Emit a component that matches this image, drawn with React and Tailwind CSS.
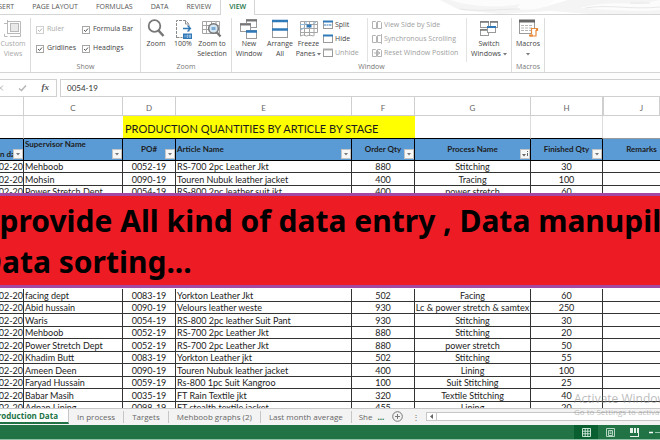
import { useState } from 'react';

const TABS = ['INSERT', 'PAGE LAYOUT', 'FORMULAS', 'DATA', 'REVIEW', 'VIEW'];
const SHEETS = ['In process', 'Targets', 'Mehboob graphs (2)', 'Last month average'];

const TOP_ROWS = [
  ['Mehboob', '0052-19', 'RS-700 2pc Leather Jkt', '880', 'Stitching', '30'],
  ['Mohsin', '0090-19', 'Touren Nubuk leather jacket', '400', 'Tracing', '100'],
  ['Power Stretch Dept', '0054-19', 'RS-800 2pc leather suit jkt', '400', 'power stretch', '60'],
];

const BOTTOM_ROWS = [
  ['facing dept', '0083-19', 'Yorkton Leather Jkt', '502', 'Facing', '60'],
  ['Abid hussain', '0090-19', 'Velours leather weste', '930', 'Lc & power stretch & samtex', '250'],
  ['Waris', '0054-19', 'RS-800 2pc leather Suit Pant', '930', 'Stitching', '30'],
  ['Mehboob', '0052-19', 'RS-700 2pc Leather Jkt', '880', 'Stitching', '20'],
  ['Power Stretch Dept', '0052-19', 'RS-700 2pc Leather Jkt', '880', 'power stretch', '50'],
  ['Khadim Butt', '0083-19', 'Yorkton Leather jkt', '502', 'Stitching', '55'],
  ['Ameen Deen', '0090-19', 'Touren Nubuk leather jacket', '400', 'Lining', '100'],
  ['Faryad Hussain', '0059-19', 'Rs-800 1pc Suit Kangroo', '100', 'Suit Stitching', '25'],
  ['Babar Masih', '0035-19', 'FT Rain Textile jkt', '320', 'Textile Stitching', '40'],
  ['Adnan Lining', '0098-19', 'FT stealth textile jacket', '455', 'Lining', '20'],
];

/* ---------- icons ---------- */

const CustomViewsIcon = () => (
  <svg width="20" height="19" viewBox="0 0 20 19" fill="none" stroke="#b9b9b9">
    <path d="M4.500 1v14M1 4.500h3M4.500 2.500h13v12h-13M1.500 15v2.500h3M7 17.500h10.500V15" />
    <rect x="7.500" y="4.500" width="8" height="8" fill="#e9e9e9" />
  </svg>
);

const ZoomIcon = () => (
  <svg width="20" height="19" viewBox="0 0 20 19" fill="none" stroke="#777">
    <circle cx="8.500" cy="7" r="5.800" strokeWidth="1.800" />
    <path d="M12.500 11.500l5 5.500" strokeWidth="2.600" />
  </svg>
);

const PageZoomIcon = () => (
  <svg width="20" height="20" viewBox="0 0 20 20" fill="none">
    <path d="M3.500 19V1.500h9l3.500 3.500v8M3.500 18.500h6" stroke="#8c8c8c" strokeDasharray="3 1" />
    <path d="M12.500 1.500V5H16" stroke="#8c8c8c" />
    <path d="M10 9.500h7M14.500 6.500l3 3-3 3" stroke="#2f79b9" strokeWidth="1.300" />
    <rect x="10" y="14.500" width="9" height="5.500" fill="#2f79b9" />
    <path d="M12 16v2.500M14 16h1v2.500h-1zM16.500 16h1v2.500h-1z" stroke="#cfe0f0" strokeWidth=".6" />
  </svg>
);

const ZoomSelectionIcon = () => (
  <svg width="20" height="19" viewBox="0 0 20 19" fill="none">
    <path d="M.5 2.500h17v12H.5zM.5 6.500h17M.5 10.500h17M4.500 2.500v12M9.500 2.500v12M14 2.500v12" stroke="#a5a5a5" />
    <circle cx="11.500" cy="9.500" r="4.800" fill="#d6e6f3" stroke="#777" strokeWidth="1.500" />
    <rect x="9.500" y="8" width="4" height="3" fill="#79acd6" />
    <path d="M15 13.500l3.500 4" stroke="#777" strokeWidth="2.300" />
  </svg>
);

const NewWindowIcon = () => (
  <svg width="20" height="20" viewBox="0 0 20 20" fill="#fff" stroke="#9a9a9a">
    <rect x="7.500" y=".5" width="10" height="8" />
    <path d="M7 1.500h11" stroke="#777" strokeWidth="2" />
    <rect x="1.500" y="4.500" width="10" height="8" />
    <path d="M1 5.500h11" stroke="#777" strokeWidth="2" />
    <rect x="7.500" y="11.500" width="10" height="8" />
    <path d="M7 12.500h11" stroke="#2f79b9" strokeWidth="2.500" />
  </svg>
);

const ArrangeIcon = () => (
  <svg width="20" height="20" viewBox="0 0 20 20" fill="#fff" stroke="#9a9a9a">
    <rect x="2.500" y="1.500" width="15" height="17" />
    <path d="M2 2h16M2 10.500h16" stroke="#2f79b9" strokeWidth="2.500" />
  </svg>
);

const FreezeIcon = () => (
  <svg width="20" height="20" viewBox="0 0 20 20" fill="none" stroke="#a5a5a5">
    <path d="M1.500 2.500h17v11h-17zM1.500 5.500h17M1.500 9.500h17M5.500 2.500V17M10.500 2.500V17M15 2.500V17M1.500 13v4l3-1 3 1 3-1 4 1" />
    <rect x="7.500" y="5.500" width="5" height="3" fill="#2f79b9" stroke="none" />
    <path d="M1 5.500h5M7 2v3M2 11l4-3M14 5l3-2" stroke="#8dbbe0" />
  </svg>
);

const SwitchIcon = () => (
  <svg width="20" height="17" viewBox="0 0 20 17" fill="#fff" stroke="#9a9a9a">
    <rect x="1.500" y="1.500" width="8" height="6" />
    <rect x="11.500" y="1.500" width="7" height="6" />
    <path d="M1 2h9M11 2h8" stroke="#777" strokeWidth="1.500" />
    <rect x="1.500" y="9.500" width="8" height="6" />
    <path d="M1 10h9" stroke="#777" strokeWidth="1.500" />
    <rect x="8.500" y="6.500" width="8" height="6" />
    <path d="M8 7h9" stroke="#2f79b9" strokeWidth="2" />
  </svg>
);

const MacrosIcon = () => (
  <svg width="22" height="19" viewBox="0 0 22 19" fill="#fff" stroke="#9a9a9a">
    <rect x="2.500" y="1.500" width="15" height="13" />
    <path d="M2 2h16" stroke="#666" strokeWidth="3" />
    <path d="M4 6.500h12M4 9h12M4 11.500h12" stroke="#b5b5b5" strokeDasharray="3 1" />
    <path d="M14.500 16.500V9.500h5v7z" stroke="none" />
    <path d="M14.500 15.500V9.500h6v2h-1.500V17h-6" stroke="#e88a3a" strokeWidth="1.200" />
    <path d="M12 15.500h4v2h-4zM19 9h2v2h-2z" fill="#e88a3a" stroke="none" />
  </svg>
);

const SmallWindow = ({ color, split }) => (
  <svg width="10" height="10" viewBox="0 0 10 10" fill="#fff" stroke="#9a9a9a">
    <rect x=".5" y="1.500" width="9" height="7" />
    <path d="M0 1.500h10" stroke={color} strokeWidth="2" />
    {split && <path d="M1 5h8" stroke="#2f79b9" strokeDasharray="2 .5" />}
  </svg>
);

const PagesIcon = ({ children }) => (
  <svg width="10" height="10" viewBox="0 0 10 10" fill="none" stroke="#b3b3b3">
    <path d="M.5 1.500h3l1 1v6h-4zM5.500 1.500h3l1 1v6h-4z" />
    {children}
  </svg>
);

const Caret = () => (
  <svg width="4" height="3" viewBox="0 0 4 3" fill="#777"><path d="M0 0h4L2 2.500z" /></svg>
);

/* ---------- ribbon parts ---------- */

const BigButton = ({ icon, lines, menu, disabled, className }) => (
  <button
    type="button"
    disabled={disabled}
    className={`flex shrink-0 flex-col items-center leading-[10px] text-[#444] disabled:text-[#a9a9a9] ${className}`}
  >
    <span className="flex h-[21px] items-center">{icon}</span>
    {lines.map((line, i) => (
      <span key={line} className="flex items-center gap-0.5 whitespace-nowrap">
        {line}
        {menu && i === lines.length - 1 && lines.length > 1 && <Caret />}
      </span>
    ))}
    {menu && lines.length === 1 && <span className="flex h-[10px] items-center"><Caret /></span>}
  </button>
);

const SmallButton = ({ icon, label, disabled }) => (
  <button
    type="button"
    disabled={disabled}
    className="flex items-center gap-0.5 whitespace-nowrap text-[#444] disabled:text-[#a0a0a0]"
  >
    {icon}
    {label}
  </button>
);

const Check = ({ label, disabled }) => (
  <label className={`flex items-center gap-[3px] whitespace-nowrap ${disabled ? 'text-[#a9a9a9]' : 'text-[#444]'}`}>
    <span className="grid">
      <input
        type="checkbox"
        defaultChecked
        disabled={disabled}
        className="peer col-start-1 row-start-1 size-2 appearance-none border border-[#a6a6a6] bg-white disabled:border-[#cfcfcf]"
      />
      <svg className="pointer-events-none invisible col-start-1 row-start-1 size-2 peer-checked:visible" viewBox="0 0 8 8" fill="none" stroke={disabled ? '#b5b5b5' : '#555'}>
        <path d="M2 4l1.500 1.500L6 2.500" />
      </svg>
    </span>
    {label}
  </label>
);

const Group = ({ title, className, children }) => (
  <section className={`flex shrink-0 flex-col border-r border-[#dcdcdc] ${className}`}>
    <div className="flex h-[47px]">{children}</div>
    {title && <h2 className="text-center leading-[10px] text-[#777]">{title}</h2>}
  </section>
);

const Ribbon = () => (
  <div className="flex h-[58px] shrink-0 overflow-hidden border-b border-[#d5d5d5] bg-white pt-[3px] text-[7px]">
    <Group className="w-[31px]">
      <BigButton icon={<CustomViewsIcon />} lines={['Custom', 'Views']} disabled className="w-[26px]" />
    </Group>
    <Group title="Show" className="w-[110px]">
      <div className="grid grid-cols-[46px_1fr] grid-rows-2 pt-0.5 pb-1 pl-[5px]">
        <Check label="Ruler" disabled />
        <Check label="Formula Bar" />
        <Check label="Gridlines" />
        <Check label="Headings" />
      </div>
    </Group>
    <Group title="Zoom" className="w-[91px]">
      <BigButton icon={<ZoomIcon />} lines={['Zoom']} className="w-[30px]" />
      <BigButton icon={<PageZoomIcon />} lines={['100%']} className="w-[24px]" />
      <BigButton icon={<ZoomSelectionIcon />} lines={['Zoom to', 'Selection']} className="w-[34px]" />
    </Group>
    <Group title="Window" className="w-[280px]">
      <BigButton icon={<NewWindowIcon />} lines={['New', 'Window']} className="w-[34px]" />
      <BigButton icon={<ArrangeIcon />} lines={['Arrange', 'All']} className="w-[28px]" />
      <BigButton icon={<FreezeIcon />} lines={['Freeze', 'Panes']} menu className="w-[29px]" />
      <div className="flex w-[44px] flex-col justify-around pb-0.5">
        <SmallButton icon={<SmallWindow color="#2f79b9" split />} label="Split" />
        <SmallButton icon={<SmallWindow color="#2f79b9" />} label="Hide" />
        <SmallButton icon={<SmallWindow color="#aaa" />} label="Unhide" disabled />
      </div>
      <div className="flex w-[100px] flex-col justify-around border-x border-[#e2e2e2] pb-0.5 pl-1">
        <SmallButton icon={<PagesIcon />} label="View Side by Side" disabled />
        <SmallButton icon={<PagesIcon><path d="M9.500 0v10" /></PagesIcon>} label="Synchronous Scrolling" disabled />
        <SmallButton icon={<PagesIcon><path d="M2 5h6M6 3.500L8 5 6 6.500" /></PagesIcon>} label="Reset Window Position" disabled />
      </div>
      <BigButton icon={<SwitchIcon />} lines={['Switch', 'Windows']} menu className="w-[44px]" />
    </Group>
    <Group title="Macros" className="w-[33px]">
      <BigButton icon={<MacrosIcon />} lines={['Macros']} menu className="w-[32px]" />
    </Group>
  </div>
);

const RibbonTabs = () => (
  <nav className="flex h-[15px] shrink-0 border-b border-[#d5d5d5] bg-white text-[7px] text-[#555]">
    <div className="-ml-[18px] flex shrink-0">
      {TABS.map((tab) => (
        <button
          key={tab}
          type="button"
          className={
            tab === 'VIEW'
              ? '-mb-px border-x border-[#d5d5d5] bg-white px-2 font-semibold text-[#217346]'
              : 'px-[9px]'
          }
        >
          {tab}
        </button>
      ))}
    </div>
    <svg className="ml-auto h-[14px] w-[240px]" viewBox="0 0 240 14" preserveAspectRatio="none" fill="#f4f4f4">
      <path d="M20 0h90l14 7 24-7h92v14H170l-40-3-50 3-40-4z" />
      <path d="M30 0c20 7 50 8 70 4l-4 5c20 2 30-1 38-9zM160 8c20-6 40-5 60-4l20-4v10c-26 2-50 0-80-2z" fill="#fcfcfc" />
      <path d="M40 9c20 3 40 0 60 0M165 8c25-4 45 2 75-1M210 3h20" stroke="#e8e8e8" fill="none" />
    </svg>
  </nav>
);

const FormulaBar = () => {
  const [value, setValue] = useState('0054-19');
  return (
    <div className="flex h-[24px] shrink-0 gap-[3px] bg-[#fdfdfd] pt-[6px] text-[8px]">
      <div className="flex w-[57px] shrink-0 items-center justify-between border border-l-0 border-[#d0d0d0] bg-white pr-[7px]">
        <button type="button" aria-label="Cancel">
          <svg width="4" height="6" viewBox="0 0 4 6" stroke="#b5b5b5"><path d="M-2 .5l5 5M3 .5l-5 5" /></svg>
        </button>
        <button type="button" aria-label="Enter">
          <svg width="9" height="8" viewBox="0 0 9 8" fill="none" stroke="#b5b5b5" strokeWidth="1.500"><path d="M1 4.500l2.500 2L8 1.500" /></svg>
        </button>
        <button type="button" className="font-['Liberation_Serif',serif] text-[9px] font-bold text-[#555] italic">
          fx
        </button>
      </div>
      <input
        aria-label="Formula"
        value={value}
        onChange={(e) => setValue(e.target.value)}
        className="min-w-0 flex-1 border border-r-0 border-[#d0d0d0] bg-white px-[6px] font-[Lato,sans-serif] text-[8px] text-[#333] outline-none"
      />
    </div>
  );
};

/* ---------- sheet ---------- */

const FilterButton = ({ label, sorted }) => (
  <button
    type="button"
    aria-label={label}
    className="absolute right-0 bottom-px flex size-[10px] items-center justify-center border border-[#c5c5c5] bg-[#f7f7f7]"
  >
    {sorted ? (
      <svg width="7" height="6" viewBox="0 0 7 6" fill="#666"><path d="M0 3h4L2 5.500zM5 0h1v1H5zM5 2h1v3H5z" /></svg>
    ) : (
      <Caret />
    )}
  </button>
);

const HeaderCell = ({ children, filter = true, sorted, className = '' }) => (
  <th scope="col" className={`relative border-r border-b border-black bg-[#5b9bd5] p-0 font-bold whitespace-nowrap ${className}`}>
    {children}
    {filter && <FilterButton label={`Filter ${children}`} sorted={sorted} />}
  </th>
);

const Row = ({ row }) => {
  const [name, po, article, qty, process, finished] = row;
  const cell = 'border-r border-b border-[#333] p-0 whitespace-nowrap';
  return (
    <tr className="odd:h-[12px] even:h-[13px]">
      <td className={cell}><span className="float-right">-02-20</span></td>
      <td className={`${cell} pl-px`}>{name}</td>
      <td className={`${cell} text-center`}>{po}</td>
      <td className={`${cell} pl-px`}>{article}</td>
      <td className={`${cell} text-center`}>{qty}</td>
      <td className={`${cell} text-center`}>{process}</td>
      <td className={`${cell} text-center`}>{finished}</td>
      <td className="border-b border-[#333] p-0" />
    </tr>
  );
};

const Sheet = () => {
  const letter = 'border-r border-b border-[#cfcfcf] p-0 pt-1 font-normal';
  return (
    <table className="w-full table-fixed border-separate border-spacing-0 font-[Lato,sans-serif] text-[9px] leading-[11px] text-[#1c1c1c]">
      <colgroup>
        <col className="w-[24px]" />
        <col className="w-[99px]" />
        <col className="w-[53px]" />
        <col className="w-[176px]" />
        <col className="w-[63px]" />
        <col className="w-[116px]" />
        <col className="w-[72px]" />
        <col />
      </colgroup>
      <thead>
        <tr className="h-[19px] text-[8px] text-[#666]">
          <th className={letter} />
          <th className={letter}>C</th>
          <th className={letter}>D</th>
          <th className={letter}>E</th>
          <th className={letter}>F</th>
          <th className={letter}>G</th>
          <th className={letter}>H</th>
          <th className={`${letter} border-l pl-5`}>J</th>
        </tr>
        <tr className="h-[23px]">
          <td className="border-r border-b border-r-[#dcdcdc] border-b-black p-0" />
          <td className="border-b border-black p-0" />
          <td colSpan={3} className="border-b border-black bg-[#ffff00] p-0 pt-1 pl-0.5 text-[11px] leading-[16px] whitespace-nowrap">
            PRODUCTION QUANTITIES BY ARTICLE BY STAGE
          </td>
          <td className="border-r border-b border-r-[#dcdcdc] border-b-black p-0" />
          <td className="border-r border-b border-r-[#dcdcdc] border-b-black p-0" />
          <td className="border-b border-[#999] p-0" />
        </tr>
        <tr className="h-[22px] text-[8px]">
          <HeaderCell className="text-left align-bottom">n da</HeaderCell>
          <HeaderCell className="pl-px text-left align-top">Supervisor Name</HeaderCell>
          <HeaderCell>PO#</HeaderCell>
          <HeaderCell className="pl-px text-left">Article Name</HeaderCell>
          <HeaderCell>Order Qty</HeaderCell>
          <HeaderCell sorted>Process Name</HeaderCell>
          <HeaderCell>Finished Qty</HeaderCell>
          <HeaderCell filter={false} className="border-r-0 pl-5">Remarks</HeaderCell>
        </tr>
      </thead>
      <tbody>
        {TOP_ROWS.map((row, i) => <Row key={i} row={row} />)}
        {/* rows under the banner */}
        <tr className="h-[45px]"><td colSpan={8} /></tr>
        <tr className="h-[46px]"><td colSpan={8} /></tr>
        {BOTTOM_ROWS.map((row, i) => <Row key={i} row={row} />)}
      </tbody>
    </table>
  );
};

const Banner = () => (
  <div className="absolute inset-x-0 top-[96px] overflow-hidden border-y-[3px] border-[#a349a4] bg-[#ed1c24] pt-1 pb-[3px]">
    <p className="-ml-5 font-['Noto_Sans',sans-serif] text-[30px] leading-[41px] font-bold whitespace-nowrap text-black">
      I provide All kind of data entry , Data manupilation
      <br />
      Data sorting...
    </p>
  </div>
);

const SheetTabs = () => (
  <div className="flex h-[17px] shrink-0 items-stretch overflow-hidden border-t border-[#c6c6c6] bg-[#f3f3f3] pb-px text-[8px] whitespace-nowrap text-[#666]">
    <button type="button" className="flex w-[69px] shrink-0 items-center justify-end border-r border-b-2 border-r-[#c6c6c6] border-b-[#217346] bg-white pr-[10px] font-bold text-[#217346]">
      Production Data
    </button>
    <div className="flex shrink-0 items-center">
      {SHEETS.map((name) => (
        <button key={name} type="button" className="h-3 border-r border-[#c6c6c6] px-2">{name}</button>
      ))}
      <button type="button" className="pl-[7px]">She</button>
      <button type="button" className="px-[5px] font-bold text-[#217346]">...</button>
      <button type="button" aria-label="New sheet" className="mx-[3px]">
        <svg width="11" height="11" viewBox="0 0 11 11" fill="none" stroke="#777">
          <circle cx="5.500" cy="5.500" r="4.800" />
          <path d="M5.500 3v5M3 5.500h5" />
        </svg>
      </button>
    </div>
    <span className="flex w-[20px] shrink-0 items-center justify-center">⋮</span>
    <div className="my-[3px] flex flex-1 border border-r-0 border-[#c6c6c6] bg-white">
      <button type="button" aria-label="Scroll left" className="flex w-[10px] items-center justify-center border-r border-[#c6c6c6]">
        <svg width="3" height="5" viewBox="0 0 3 5" fill="#666"><path d="M3 0v5L0 2.500z" /></svg>
      </button>
    </div>
  </div>
);

const StatusBar = () => (
  <footer className="flex h-[15px] shrink-0 justify-end border-b border-[#8fc0a5] bg-[#217346]">
    <button type="button" aria-label="Normal view" className="flex w-6 items-center justify-center bg-[#0a5f31]">
      <svg width="9" height="9" viewBox="0 0 9 9" fill="none" stroke="#d9eee2"><path d="M.5.5h8v8h-8zM.5 3.200h8M.5 5.800h8M3.200 0v9M5.800 0v9" strokeWidth=".9" /></svg>
    </button>
    <button type="button" aria-label="Page layout view" className="flex w-6 items-center justify-center">
      <svg width="9" height="9" viewBox="0 0 9 9" fill="none" stroke="#b5d6c3"><path d="M.5.5h8v8h-8zM2.500 2.500h4v5h-4zM3.500 4h2M3.500 5.500h2" /></svg>
    </button>
    <button type="button" aria-label="Page break view" className="flex w-6 items-center justify-center">
      <svg width="9" height="9" viewBox="0 0 9 9" fill="#e4f2ea"><path d="M0 0h3v5H0zM4 0h2v5H4zM7 0h2v9H0V8h8V5H7z" /></svg>
    </button>
    <button type="button" aria-label="Zoom out" className="flex w-[14px] items-center justify-end">
      <svg width="11" height="3" viewBox="0 0 11 3"><path d="M0 1.500h4" stroke="#fff" strokeWidth="1.500" /><path d="M6 1.500h5" stroke="#9cc7af" /></svg>
    </button>
  </footer>
);

const App = () => (
  <div className="relative flex h-screen flex-col overflow-hidden bg-white font-['Open_Sans',sans-serif]">
    <RibbonTabs />
    <Ribbon />
    <FormulaBar />
    <main className="relative min-h-0 flex-1 overflow-hidden">
      <Sheet />
      <Banner />
    </main>
    <SheetTabs />
    <StatusBar />
    <div className="pointer-events-none absolute right-0 bottom-[22px] w-[86px] overflow-hidden whitespace-nowrap text-[#8c8c8c]/60">
      <p className="text-[12px] leading-[15px]">Activate Windows</p>
      <p className="text-[8px] leading-[12px]">Go to Settings to activate Windows.</p>
    </div>
  </div>
);

export default App;
